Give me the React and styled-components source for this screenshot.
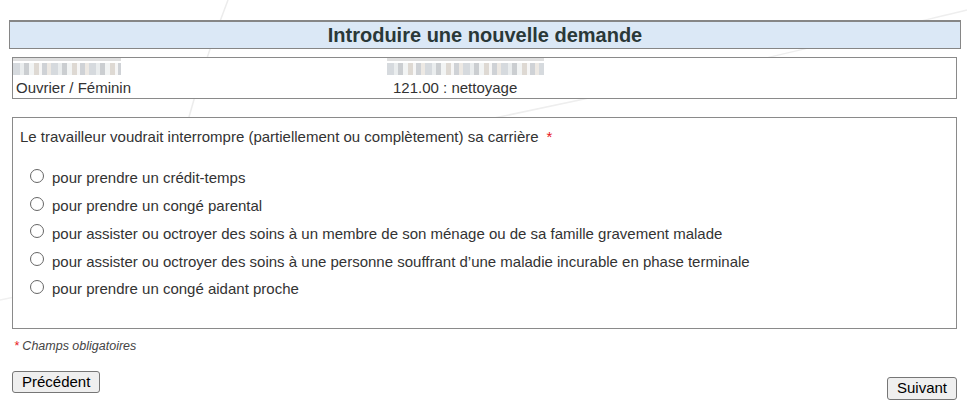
import React from 'react';
import styled, { createGlobalStyle } from 'styled-components';

const GlobalStyle = createGlobalStyle`
  html, body {
    margin: 0;
    padding: 0;
    background: #fff;
  }
  body {
    font-family: Arial, "Liberation Sans", sans-serif;
    font-size: 15px;
    color: #333;
  }
`;

const Page = styled.div`
  position: relative;
  width: 967px;
  height: 419px;
  overflow: hidden;
  box-sizing: border-box;
  padding: 20px 10px 0 12px;
`;

// faint decorative strokes from the page background
const Backdrop = styled.svg`
  position: absolute;
  inset: 0;
  z-index: 0;
  pointer-events: none;
`;

const Content = styled.div`
  position: relative;
  z-index: 1;
`;

const TitleBar = styled.h1`
  margin: 0 -4px 0 -3px;
  background: #dbe8f6;
  border: 1px solid #868686;
  border-top-width: 2px;
  text-align: center;
  font-size: 20px;
  line-height: 26px;
  font-weight: bold;
  color: #2a3838;
`;

const InfoBox = styled.div`
  margin-top: 8px;
  border: 1px solid #8a8a8a;
  display: grid;
  grid-template-columns: 373px 1fr;
  background: #fff;
`;

const InfoCell = styled.div`
  line-height: 20px;
  height: 20px;
  padding-left: ${(p) => (p.$right ? '7px' : '3px')};
  white-space: nowrap;
`;

const Redacted = styled.span`
  display: inline-block;
  vertical-align: top;
  width: ${(p) => p.$w}px;
  height: 19px;
  margin-left: ${(p) => p.$shift || 0}px;
  background:
    linear-gradient(#d8d8d8, #d8d8d8) top / 100% 3px no-repeat,
    repeating-linear-gradient(
      90deg,
      #cdd2d6 0 7px,
      #e6e9ea 7px 11px,
      #bfc3c6 11px 16px,
      #eff2f2 16px 21px,
      #d6d0c9 21px 26px,
      #f5f5f5 26px 29px,
      #c4c8cc 29px 34px,
      #e9e4de 34px 38px
    ) 0 5px / 100% 12px no-repeat;
  opacity: 0.8;
  filter: blur(0.4px);
`;

const QuestionBox = styled.fieldset`
  margin: 18px 0 0;
  border: 1px solid #8a8a8a;
  padding: 9px 7px 25px;
  min-width: 0;
  background: #fff;
`;

const Question = styled.div`
  line-height: 20px;
`;

const Required = styled.span`
  color: #e8141c;
  margin-left: ${(p) => p.$gap || 0}px;
`;

const Options = styled.div`
  margin-top: 17px;
`;

const Option = styled.label`
  display: flex;
  align-items: center;
  height: 27.75px;
  padding-left: 10px;
  gap: 8px;
`;

const Radio = styled.input.attrs({ type: 'radio' })`
  appearance: none;
  margin: 0 0 4px;
  width: 14px;
  height: 14px;
  border: 1px solid #666;
  border-radius: 50%;
  background: #fff;
  flex: none;
`;

const Note = styled.div`
  margin-top: 9px;
  padding-left: 2px;
  font-size: 12.5px;
  line-height: 16px;
  font-style: italic;
  color: #444;
`;

const Nav = styled.div`
  margin-top: 17px;
  display: flex;
  justify-content: space-between;
  align-items: flex-start;
`;

const Button = styled.button`
  margin-top: ${(p) => p.$drop || 0}px;
  font-family: Arial, "Liberation Sans", sans-serif;
  font-size: 15px;
  line-height: 18px;
  color: #000;
  background: #efefef;
  border: 1px solid #767676;
  border-radius: 3px;
  padding: 1px 9px 1px;
  height: ${(p) => p.$h || 22}px;
`;

const options = [
  'pour prendre un crédit-temps',
  'pour prendre un congé parental',
  'pour assister ou octroyer des soins à un membre de son ménage ou de sa famille gravement malade',
  'pour assister ou octroyer des soins à une personne souffrant d\u2019une maladie incurable en phase terminale',
  'pour prendre un congé aidant proche',
];

export default function App() {
  return (
    <>
      <GlobalStyle />
      <Page>
        <Backdrop width="967" height="419" viewBox="0 0 967 419">
          <path d="M228 0 C 205 60, 185 120, 170 200" stroke="#ececec" strokeWidth="1.5" fill="none" />
          <path d="M967 10 C 800 50, 600 100, 330 150" stroke="#eeeeee" strokeWidth="1.5" fill="none" />
          <path d="M0 300 C 20 296, 40 292, 60 290" stroke="#f0f0f0" strokeWidth="1.5" fill="none" />
        </Backdrop>
        <Content>
          <TitleBar>Introduire une nouvelle demande</TitleBar>

          <InfoBox>
            <InfoCell><Redacted $w={108} $shift={-3} /></InfoCell>
            <InfoCell $right><Redacted $w={157} $shift={-6} /></InfoCell>
            <InfoCell>Ouvrier / Féminin</InfoCell>
            <InfoCell $right>121.00 : nettoyage</InfoCell>
          </InfoBox>

          <QuestionBox>
            <Question>
              Le travailleur voudrait interrompre (partiellement ou complètement) sa carrière
              <Required $gap={8}>*</Required>
            </Question>
            <Options>
              {options.map((text) => (
                <Option key={text}>
                  <Radio name="motif" />
                  <span>{text}</span>
                </Option>
              ))}
            </Options>
          </QuestionBox>

          <Note>
            <Required>*</Required> Champs obligatoires
          </Note>

          <Nav>
            <Button>Précédent</Button>
            <Button $drop={6} $h={23}>Suivant</Button>
          </Nav>
        </Content>
      </Page>
    </>
  );
}
